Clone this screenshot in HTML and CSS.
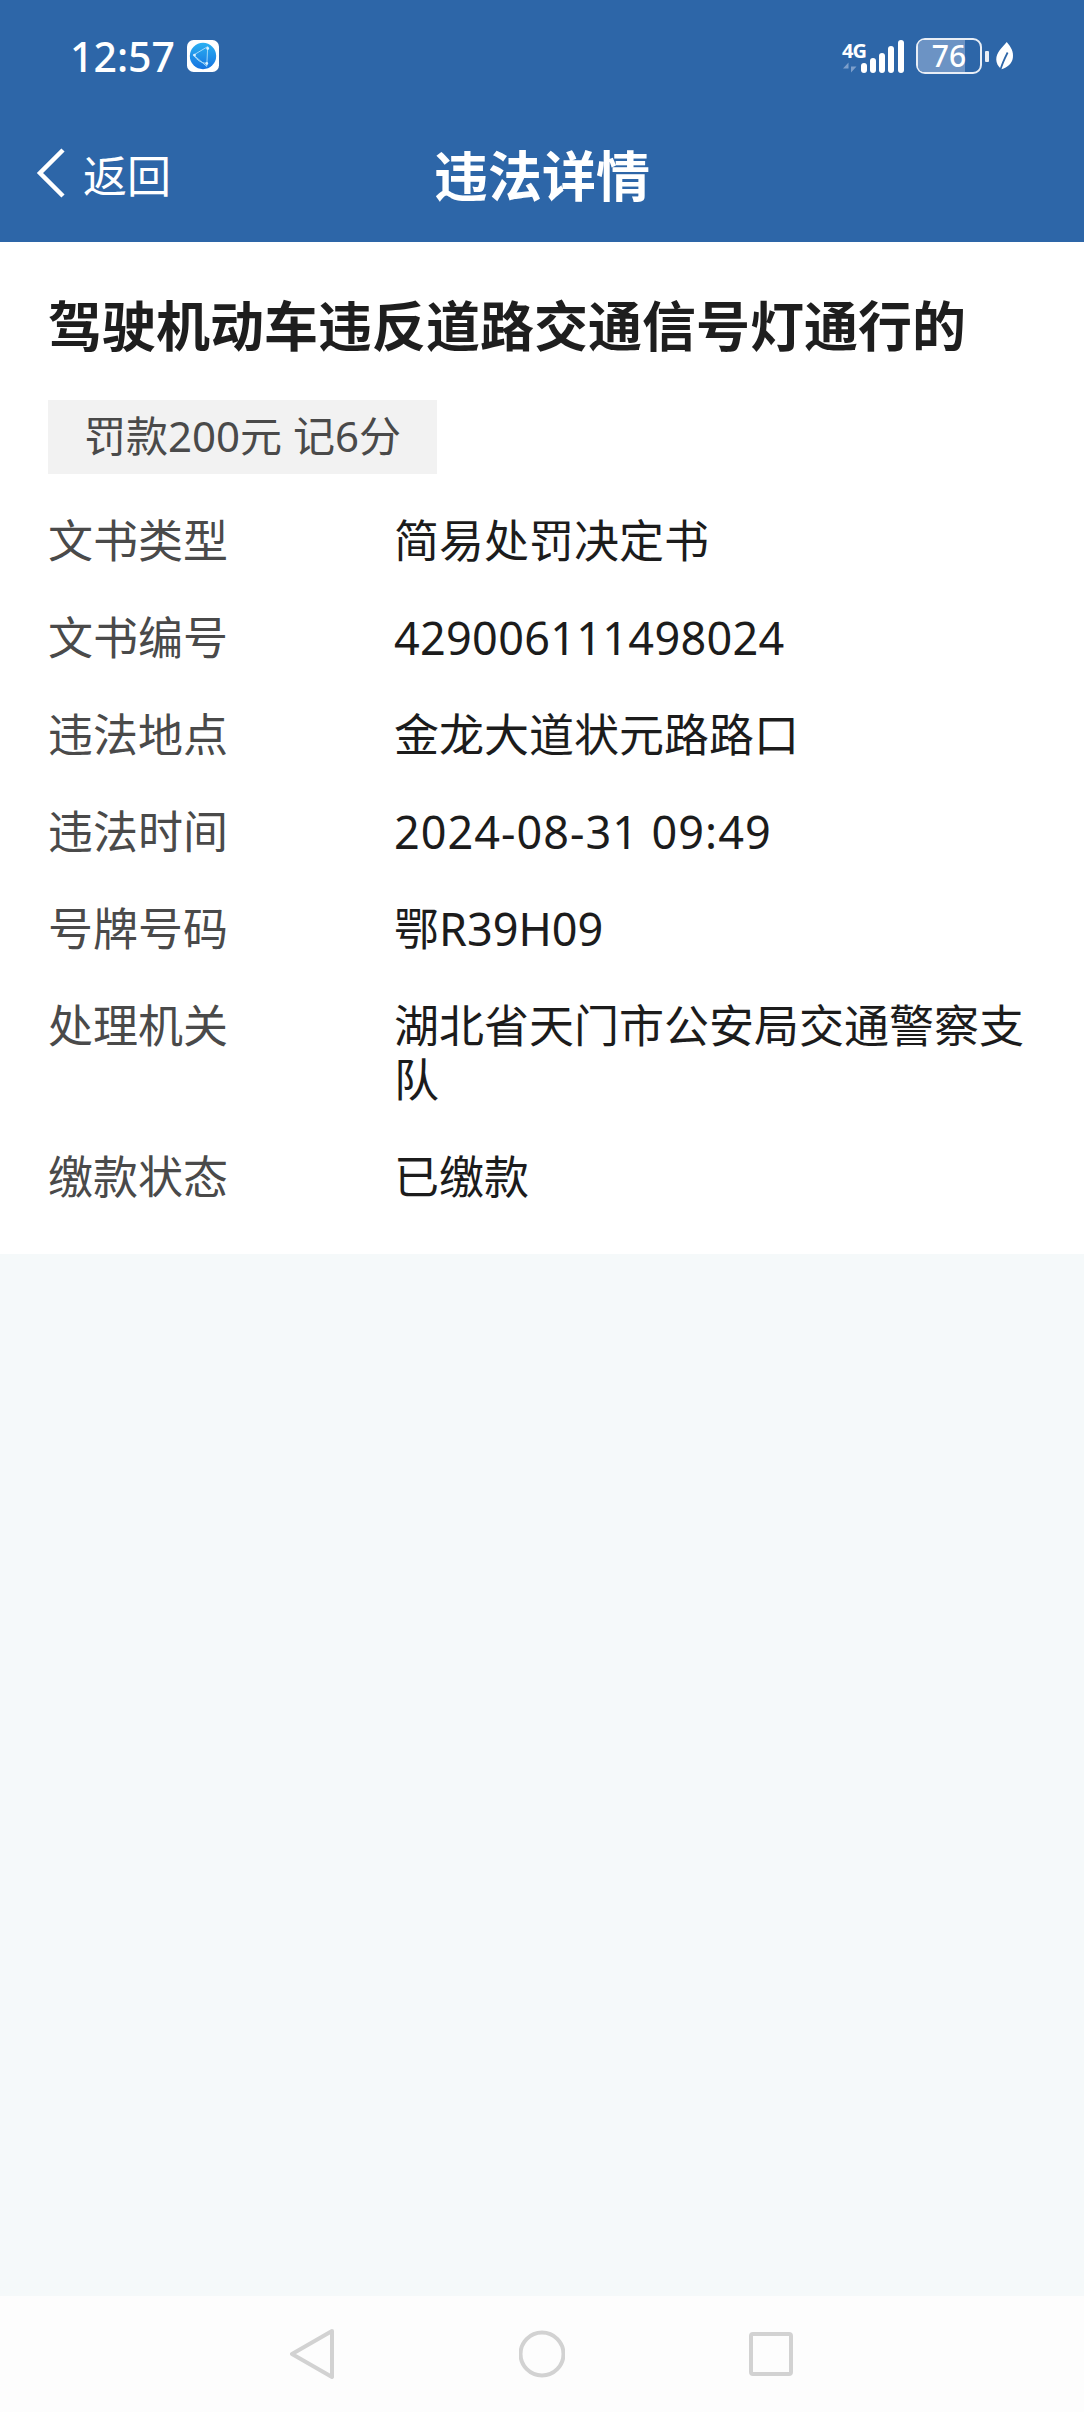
FILE: index.html
```html
<!DOCTYPE html>
<html lang="zh-CN">
<head>
    <meta charset="UTF-8">
    <meta name="viewport" content="width=device-width, initial-scale=1.0">
    <title>违法详情</title>
    <link rel="stylesheet" href="styles.css">
</head>
<body>
    <div class="page">
        <header class="header">
            <div class="status-bar">
                <div class="status-left">
                    <span class="clock">12:57</span>
                    <svg class="app-icon" viewBox="0 0 34 34">
                        <defs>
                            <linearGradient id="ball" x1="0" y1="0" x2="0" y2="1">
                                <stop offset="0" stop-color="#2bb0f2"/>
                                <stop offset="1" stop-color="#1573e0"/>
                            </linearGradient>
                        </defs>
                        <rect width="34" height="34" rx="7" fill="#fff"/>
                        <circle cx="17" cy="17" r="14" fill="url(#ball)"/>
                        <path d="M22 7 L7 16 L21 28 M22 7 L21 28 M7 16 Q12 24 21 25" fill="none" stroke="#a9dcfa" stroke-width="1"/>
                        <circle cx="22" cy="9" r="1.5" fill="#d8f0ff"/>
                        <circle cx="8" cy="16" r="1.5" fill="#d8f0ff"/>
                        <circle cx="21" cy="25" r="1.5" fill="#d8f0ff"/>
                    </svg>
                </div>
                <div class="status-right">
                    <div class="network">
                        <span class="net-label">4G</span>
                        <svg class="net-arrows" viewBox="0 0 16 10">
                            <path d="M6.500 10V0L1 6h5.500M9 0v10l5.500-6H9" fill="#7d9fcb"/>
                        </svg>
                    </div>
                    <svg class="signal" viewBox="0 0 43 33">
                        <rect x="0" y="23" width="6" height="10" rx="3" fill="#fff"/>
                        <rect x="9" y="18" width="6" height="15" rx="3" fill="#fff"/>
                        <rect x="18" y="13" width="6" height="20" rx="3" fill="#fff"/>
                        <rect x="27" y="6" width="6" height="27" rx="3" fill="#fff"/>
                        <rect x="37" y="0" width="6" height="33" rx="3" fill="#fff"/>
                    </svg>
                    <div class="battery">
                        <div class="battery-box">
                            <div class="battery-fill"></div>
                            <span class="battery-num">76</span>
                        </div>
                        <div class="battery-tip"></div>
                    </div>
                    <svg class="leaf" viewBox="0 0 20 32">
                        <path d="M12 0 C17 6 20 11 19 18 C18 25 13 29 6 31 C2 28 0 24 0 20 C0 12 7 6 12 0 Z" fill="#fff"/>
                        <path d="M5 31 C7 24 10 18 13 12" fill="none" stroke="#2d66a8" stroke-width="2"/>
                    </svg>
                </div>
            </div>
            <div class="nav-bar">
                <div class="back">
                    <svg class="back-icon" viewBox="0 0 32 52">
                        <path d="M28 3 L5 26 L28 49" fill="none" stroke="#fff" stroke-width="4.500"/>
                    </svg>
                    <span class="back-text">返回</span>
                </div>
                <h1 class="nav-title">违法详情</h1>
            </div>
        </header>

        <main class="detail">
            <h2 class="detail-title">驾驶机动车违反道路交通信号灯通行的</h2>
            <div class="penalty">罚款200元 记6分</div>
            <div class="rows">
                <div class="row"><span class="label">文书类型</span><span class="value">简易处罚决定书</span></div>
                <div class="row"><span class="label">文书编号</span><span class="value value-num">429006111498024</span></div>
                <div class="row"><span class="label">违法地点</span><span class="value">金龙大道状元路路口</span></div>
                <div class="row"><span class="label">违法时间</span><span class="value value-date">2024-08-31 09:49</span></div>
                <div class="row"><span class="label">号牌号码</span><span class="value">鄂R39H09</span></div>
                <div class="row"><span class="label">处理机关</span><span class="value">湖北省天门市公安局交通警察支队</span></div>
                <div class="row"><span class="label">缴款状态</span><span class="value">已缴款</span></div>
            </div>
        </main>

        <div class="blank"></div>

        <footer class="nav-keys">
            <svg class="key" viewBox="0 0 46 52">
                <path d="M42 3 L2 26 L42 49 Z" fill="none" stroke="#d2d2d2" stroke-width="4" stroke-linejoin="round"/>
            </svg>
            <svg class="key" viewBox="0 0 46 52">
                <circle cx="23" cy="26" r="21.500" fill="none" stroke="#d2d2d2" stroke-width="4"/>
            </svg>
            <svg class="key" viewBox="0 0 46 52">
                <rect x="3" y="6" width="40" height="40" rx="2" fill="none" stroke="#d2d2d2" stroke-width="4"/>
            </svg>
        </footer>
    </div>
</body>
</html>
```

FILE: styles.css
```css
* {
    box-sizing: border-box;
}
body {
    margin: 0;
    font-family: "Noto Sans", "Noto Sans CJK SC", sans-serif;
    background-color: #f5f9fa;
}
.page {
    display: flex;
    flex-direction: column;
    height: 100vh;
}
.header {
    height: 242px;
    background-color: #2d66a8;
    color: #fff;
}
.status-bar {
    display: flex;
    justify-content: space-between;
    align-items: center;
    height: 112px;
    padding: 0 70px 0 70px;
}
.status-left {
    display: flex;
    align-items: center;
    gap: 12px;
}
.clock {
    font-size: 41px;
    line-height: 50px;
    font-weight: 500;
}
.app-icon {
    width: 32px;
    height: 32px;
}
.status-right {
    display: flex;
    align-items: center;
}
.network {
    display: flex;
    flex-direction: column;
    width: 19px;
    white-space: nowrap;
}
.net-label {
    font-size: 20px;
    line-height: 22px;
    font-weight: 700;
    letter-spacing: -1px;
}
.net-arrows {
    width: 16px;
    height: 11px;
}
.signal {
    width: 43px;
    height: 33px;
    margin-right: 12px;
}
.battery {
    display: flex;
    align-items: center;
    gap: 3px;
    margin-right: 7px;
}
.battery-box {
    position: relative;
    width: 66px;
    height: 36px;
    border: 2.5px solid #e8eef6;
    border-radius: 9px;
    text-align: center;
}
.battery-fill {
    position: absolute;
    left: 0;
    top: 0;
    bottom: 0;
    width: 76%;
    border-radius: 6px 0 0 6px;
    background-color: #6c93c4;
}
.battery-num {
    position: relative;
    display: block;
    font-size: 30px;
    line-height: 31px;
    font-weight: 500;
}
.battery-tip {
    width: 4px;
    height: 11px;
    background-color: #e8eef6;
    border-radius: 1px;
}
.leaf {
    width: 18px;
    height: 28px;
}
.nav-bar {
    position: relative;
    display: flex;
    align-items: center;
    justify-content: center;
    height: 128px;
}
.back {
    position: absolute;
    left: 35px;
    top: 35px;
    display: flex;
    align-items: center;
    gap: 16px;
}
.back-icon {
    width: 32px;
    height: 52px;
}
.back-text {
    position: relative;
    top: 3px;
    font-size: 44px;
    line-height: 52px;
}
.nav-title {
    margin: 0;
    font-size: 54px;
    line-height: 60px;
    font-weight: 700;
}
.detail {
    height: 1012px;
    padding: 0 48px;
    background-color: #fff;
}
.detail-title {
    margin: 0;
    padding-top: 49px;
    font-size: 54px;
    line-height: 70px;
    font-weight: 700;
    color: #1e1e1e;
}
.penalty {
    display: inline-block;
    margin-top: 39px;
    height: 74px;
    padding: 0 36px;
    background-color: #f2f2f2;
    color: #4a4a4a;
    font-size: 42px;
    line-height: 72px;
}
.rows {
    display: flex;
    flex-direction: column;
    gap: 43px;
    margin-top: 40px;
    font-size: 45px;
    line-height: 54px;
}
.row {
    display: flex;
}
.label {
    width: 346px;
    flex-shrink: 0;
    color: #4a4a4a;
}
.value {
    color: #1c1c1c;
}
.value-num {
    letter-spacing: 0.3px;
}
.value-date {
    letter-spacing: 1px;
}
.blank {
    flex: 1;
}
.nav-keys {
    display: flex;
    justify-content: center;
    gap: 183px;
    align-items: center;
    height: 116px;
    background-color: #fdfdfd;
}
.key {
    width: 46px;
    height: 52px;
}
```
